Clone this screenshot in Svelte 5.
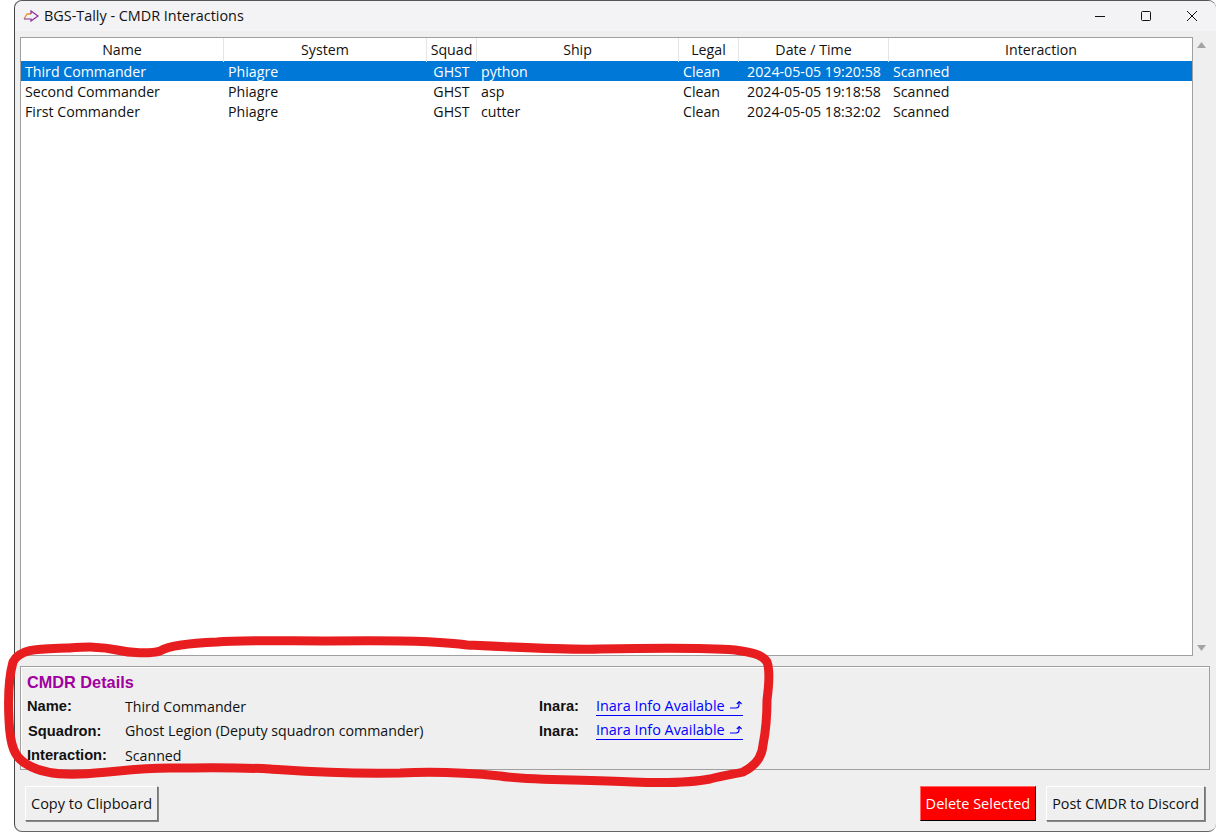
<script>
    const columns = [
        { title: 'Name', width: 203 },
        { title: 'System', width: 203 },
        { title: 'Squad', width: 50 },
        { title: 'Ship', width: 202 },
        { title: 'Legal', width: 60 },
        { title: 'Date / Time', width: 150 },
        { title: 'Interaction', width: 304 }
    ];

    const rows = [
        ['Third Commander', 'Phiagre', 'GHST', 'python', 'Clean', '2024-05-05 19:20:58', 'Scanned'],
        ['Second Commander', 'Phiagre', 'GHST', 'asp', 'Clean', '2024-05-05 19:18:58', 'Scanned'],
        ['First Commander', 'Phiagre', 'GHST', 'cutter', 'Clean', '2024-05-05 18:32:02', 'Scanned']
    ];

    const gridColumns = columns.map((c) => c.width + 'px').join(' ');
    let selected = 0;
</script>

<div class="window">
    <div class="titlebar">
        <svg class="app-icon" width="16" height="12" viewBox="0 0 16 12">
            <path d="M1 9 L4 4 H8" fill="none" stroke="#e0923a" stroke-width="1.3" />
            <path d="M1 9 H8 V11 L15 6 L8 1 V4" fill="none" stroke="#8a2a9a" stroke-width="1.2" />
        </svg>
        <span class="title">BGS-Tally - CMDR Interactions</span>
        <div class="controls">
            <svg width="46" height="30" viewBox="0 0 46 30"><path d="M18 15.5 H28" stroke="#111" /></svg>
            <svg width="46" height="30" viewBox="0 0 46 30"><rect x="18.5" y="10.5" width="9" height="9" rx="1" fill="none" stroke="#111" /></svg>
            <svg width="46" height="30" viewBox="0 0 46 30"><path d="M18 10 L28 20 M28 10 L18 20" stroke="#111" /></svg>
        </div>
    </div>

    <div class="content">
        <div class="tree-row">
            <div class="tree">
                <div class="thead" style="grid-template-columns: {gridColumns}">
                    {#each columns as col}
                        <div class="th">{col.title}</div>
                    {/each}
                </div>
                {#each rows as row, i}
                    <div class="tr" class:selected={i === selected} style="grid-template-columns: {gridColumns}">
                        {#each row as cell, c}
                            <div class="td" class:center={c === 2 || c === 5}>{cell}</div>
                        {/each}
                    </div>
                {/each}
            </div>
            <div class="scrollbar">
                <svg width="9" height="6" viewBox="0 0 9 6"><path d="M4.5 0 L9 6 H0 Z" fill="#a3a3a3" /></svg>
                <svg width="9" height="6" viewBox="0 0 9 6"><path d="M0 0 H9 L4.5 6 Z" fill="#a3a3a3" /></svg>
            </div>
        </div>

        <div class="details">
            <div class="details-title">CMDR Details</div>
            <div class="details-grid">
                <b>Name:</b>
                <span>Third Commander</span>
                <b>Inara:</b>
                <a href="#inara">Inara Info Available
                    <svg width="13" height="9" viewBox="0 0 13 9"><path d="M0 7 H6 Q9 7 9 4 V1.5 M6.8 3 L9.2 .6 L11.6 3" fill="none" stroke="#0000ff" stroke-width="1.1" /></svg>
                </a>

                <b class="squadron">Squadron:</b>
                <span>Ghost Legion (Deputy squadron commander)</span>
                <b>Inara:</b>
                <a href="#inara">Inara Info Available
                    <svg width="13" height="9" viewBox="0 0 13 9"><path d="M0 7 H6 Q9 7 9 4 V1.5 M6.8 3 L9.2 .6 L11.6 3" fill="none" stroke="#0000ff" stroke-width="1.1" /></svg>
                </a>

                <b>Interaction:</b>
                <span>Scanned</span>
            </div>
        </div>

        <div class="actions">
            <button>Copy to Clipboard</button>
            <div class="spacer"></div>
            <button class="danger">Delete Selected</button>
            <button class="discord">Post CMDR to Discord</button>
        </div>
    </div>
</div>

<!-- red marker annotation drawn on top of the screenshot -->
<svg class="marker" width="1216" height="832" viewBox="0 0 1216 832">
    <path d="M160 651 C150 654 130 653 117 650 C100 646 85 647 67 648 C40 649 20 648 13 662 C8 680 8 700 9 720 C10 745 14 758 28 765 C40 772 55 775 80 774 C110 773 133 768 170 768 C200 768 233 767 270 769 C300 771 330 774 400 773 C440 771 470 773 500 776 C533 781 580 779 633 782 C660 783 690 783 710 779 C725 775 735 774 743 772 C755 766 762 757 763 745 C766 730 767 715 767 700 C769 685 770 670 767 662 C762 654 750 652 735 650 C710 648 650 648 600 649 C570 650 530 648 467 645 C440 641 400 640 330 641 C280 641 240 640 217 642 C190 643 170 645 160 651 Z"
          fill="none" stroke="#e81d1f" stroke-width="9" stroke-linejoin="round" />
</svg>

<style>
    :global(body) {
        margin: 0;
        background: #fff;
        overflow: hidden;
    }

    .window {
        box-sizing: border-box;
        margin-left: 14px;
        height: 832px;
        width: 1202px;
        background: #efefef;
        border-left: 1px solid #444;
        border-top: 1px solid #555;
        border-bottom: 1px solid #666;
        border-radius: 8px;
        display: flex;
        flex-direction: column;
        font-family: "Open Sans", sans-serif;
        font-size: 14.2px;
        color: #111;
    }

    .titlebar {
        height: 30px;
        display: flex;
        align-items: center;
        background: #f3f3f6;
        border-radius: 8px 8px 0 0;
        padding-left: 8px;
        flex: none;
    }

    .app-icon {
        margin-right: 5px;
    }

    .title {
        font-size: 14.4px;
        margin-bottom: 2px;
    }

    .controls {
        margin-left: auto;
        display: flex;
        margin-right: 1px;
    }

    .content {
        flex: 1;
        display: flex;
        flex-direction: column;
        padding: 6px 6px 10px 5px;
        min-height: 0;
    }

    .tree-row {
        display: flex;
        height: 619px;
        flex: none;
    }

    .tree {
        width: 1173px;
        box-sizing: border-box;
        background: #fff;
        border: 1px solid #a0a0a0;
        overflow: hidden;
    }

    .thead {
        display: grid;
        height: 23px;
    }

    .th {
        text-align: center;
        line-height: 24px;
        border-right: 1px solid #e5e5e5;
        box-sizing: border-box;
    }

    .th:last-child {
        border-right: none;
    }

    .tr {
        display: grid;
        height: 20px;
        line-height: 21px;
    }

    .tr.selected {
        background: #0078d7;
        color: #fff;
    }

    .td {
        padding-left: 4px;
        white-space: nowrap;
    }

    .td.center {
        padding-left: 0;
        text-align: center;
    }

    .td.center:nth-child(3) {
        padding-right: 1px;
    }

    .scrollbar {
        width: 16px;
        margin-top: 5px;
        margin-bottom: 5px;
        display: flex;
        flex-direction: column;
        justify-content: space-between;
        align-items: center;
    }

    .details {
        box-sizing: border-box;
        height: 104px;
        margin-top: 10px;
        border: 1px solid #a0a0a0;
        box-shadow: inset 1px 1px 0 #fff;
        padding: 5px 6px;
        width: 1190px;
    }

    .details-title {
        font-family: "Liberation Sans", sans-serif;
        font-weight: bold;
        font-size: 16.3px;
        color: #a000a0;
        line-height: 20px;
    }

    .details-grid {
        display: grid;
        grid-template-columns: 98px 414px 57px auto;
        grid-auto-rows: 24.5px;
        align-items: center;
        margin-top: 2px;
    }

    .details-grid b {
        font-family: "Liberation Sans", sans-serif;
        font-size: 14.7px;
    }

    .details-grid b.squadron {
        padding-left: 1px;
    }

    .details-grid a {
        justify-self: start;
        display: inline-flex;
        align-items: center;
        gap: 5px;
        color: #0000ff;
        font-size: 14.4px;
        line-height: 18px;
        text-decoration: none;
        border-bottom: 1px solid #0000ff;
    }

    .actions {
        display: flex;
        gap: 10px;
        margin-top: 16px;
        padding: 0 5px;
        width: 1180px;
    }

    .spacer {
        flex: 1;
    }

    button {
        height: 35px;
        padding: 0 5px;
        font: inherit;
        font-size: 14.5px;
        color: #111;
        background: #efefef;
        border: 1px solid;
        border-color: #fff #777 #777 #fff;
        box-shadow: 1px 1px 0 #888;
    }

    button.danger {
        background: #f00;
        color: #fff;
        border-color: #f66 #000 #000 #f66;
        box-shadow: none;
    }

    button.discord {
        font-size: 14.4px;
    }

    .marker {
        position: absolute;
        left: 0;
        top: 0;
        pointer-events: none;
    }
</style>
